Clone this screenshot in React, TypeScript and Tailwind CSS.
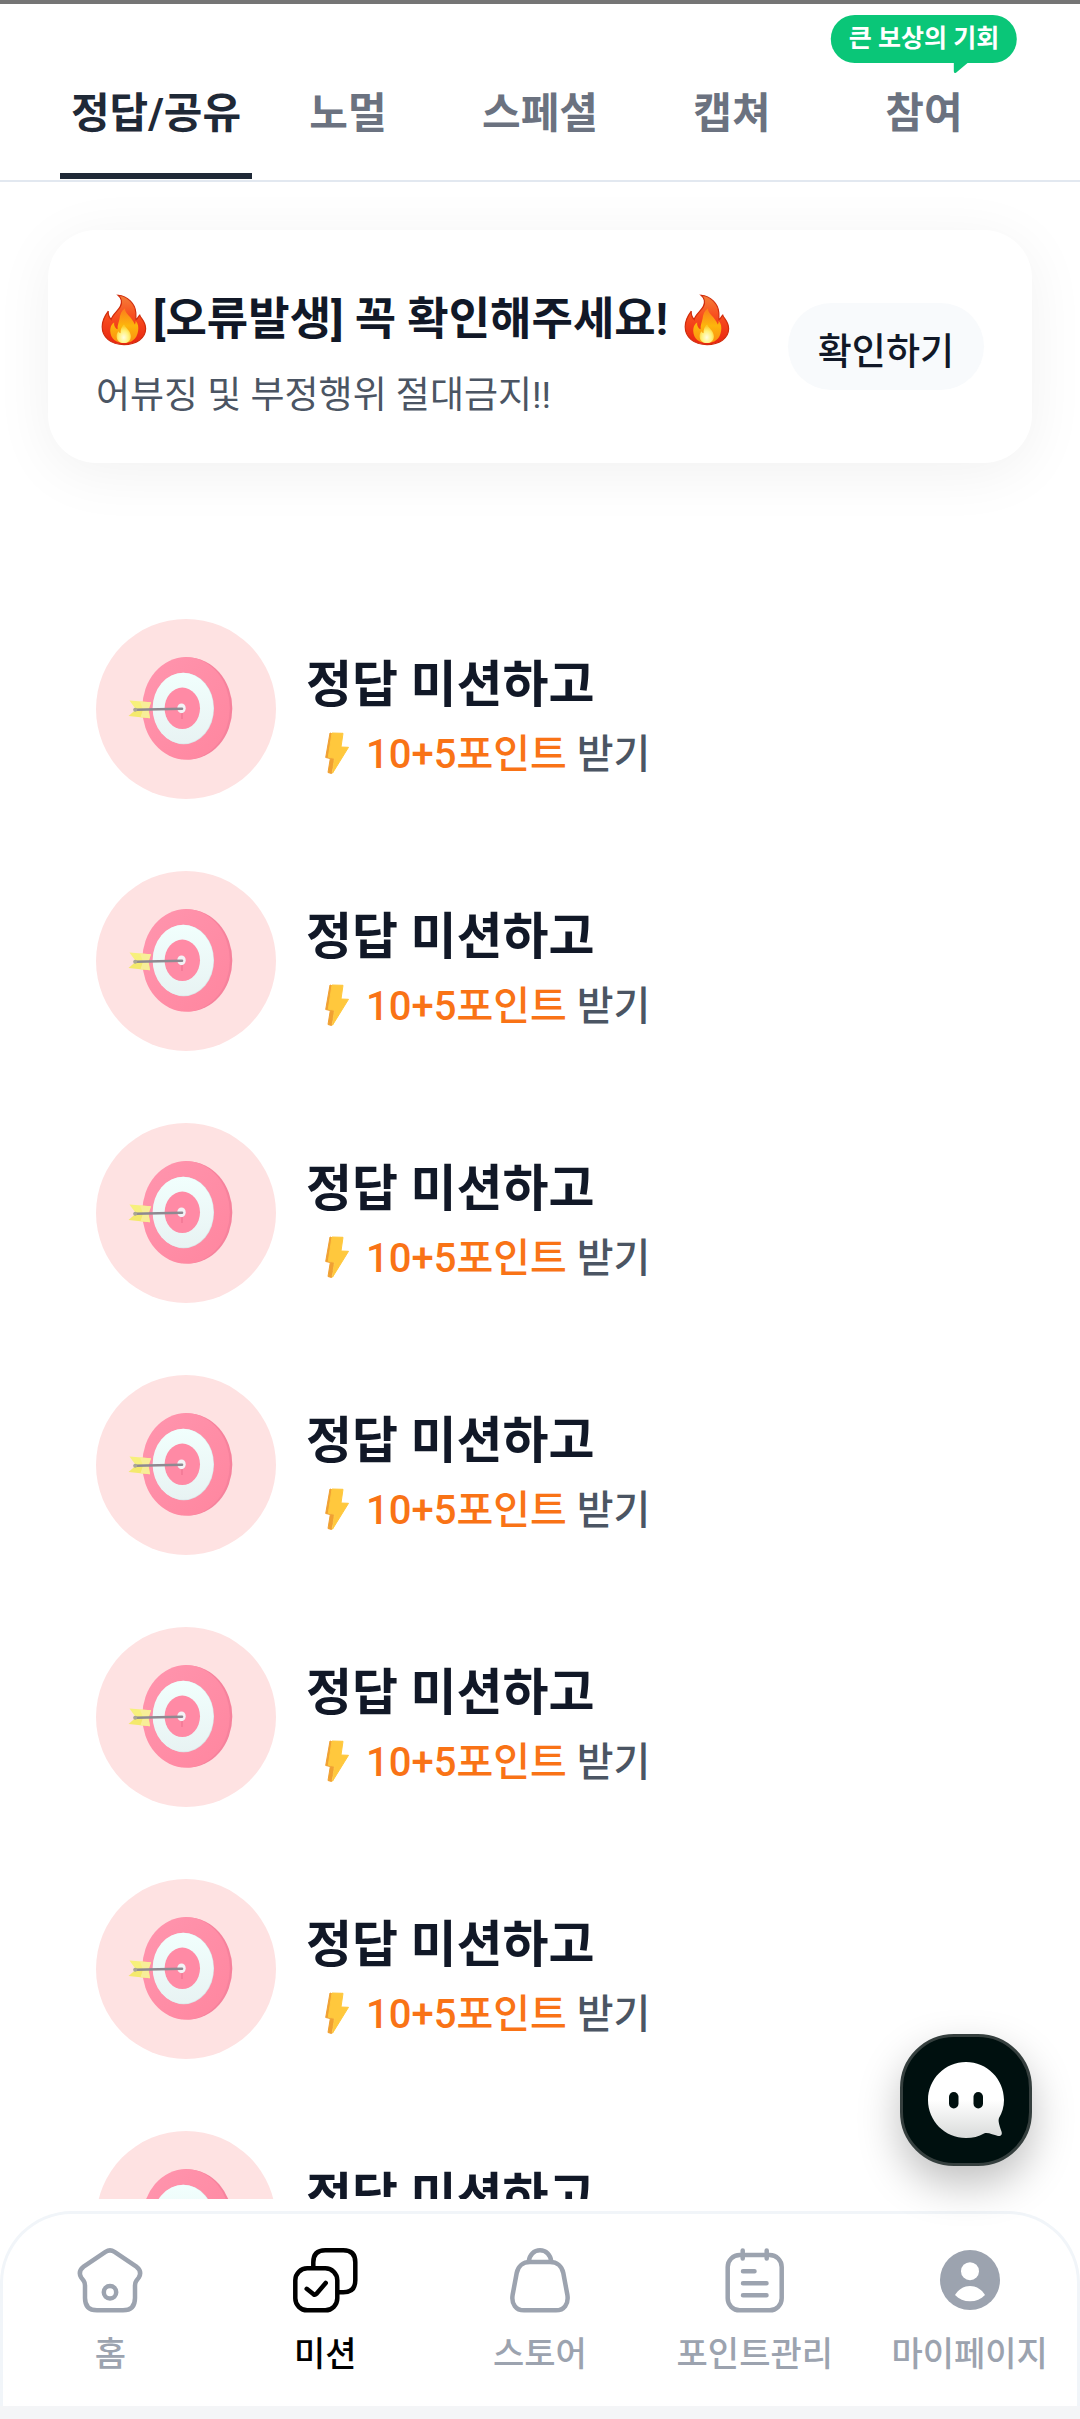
import { useState } from "react";
import type { ReactNode } from "react";
import clsx from "clsx";

const TABS = ["정답/공유", "노멀", "스페셜", "캡쳐", "참여"];

const MISSIONS = Array.from({ length: 7 }, (_, i) => ({
  id: i + 1,
  title: "정답 미션하고",
  point: "10+5포인트",
}));

function FireIcon() {
  return (
    <svg className="w-[57px] h-[57px] shrink-0" viewBox="0 0 58 58" aria-hidden="true">
      <defs>
        <linearGradient id="fire-outer" x1="0" y1="0" x2="0" y2="1">
          <stop offset="0" stopColor="#f4803a" />
          <stop offset="0.4" stopColor="#f8501f" />
          <stop offset="1" stopColor="#ea2410" />
        </linearGradient>
        <linearGradient id="fire-inner" x1="0" y1="0" x2="0" y2="1">
          <stop offset="0" stopColor="#fb7c1c" />
          <stop offset="0.5" stopColor="#fdb50c" />
          <stop offset="1" stopColor="#fb8f12" />
        </linearGradient>
        <radialGradient id="fire-core" cx="0.5" cy="0.7" r="0.6">
          <stop offset="0" stopColor="#fffde0" />
          <stop offset="0.6" stopColor="#fff176" />
          <stop offset="1" stopColor="#fdc92b" />
        </radialGradient>
      </defs>
      <path
        fill="url(#fire-outer)"
        stroke="#d02c0c"
        strokeWidth="1.2"
        d="M22.5 4.3C32 5 40 13 40.5 22C40.8 25 40.3 27 40.8 29C42.5 28 43 26 44.5 24.5C45.5 28 50.5 31 50.5 38.5C50.5 48 41 54.5 28.5 54.5C15 54.5 6.3 47 6.3 36.5C6.3 29 9.5 24.5 12.5 20.5C12 24 13.5 27 15.5 29C17 22 27.5 18 25.8 9.5C25.3 7 24 5.5 22.5 4.3Z"
      />
      <path
        fill="url(#fire-inner)"
        d="M29.5 17.5C29 23 36.5 26 39.5 34C40.2 32.8 40.5 31.5 40.3 30.2C43 33 43.500 37 42.8 41C41.5 49 36 53 28.5 53C20.5 53 14.8 48.5 14.5 41C14.3 37 16 33 18.5 32C18 36 20.5 38.5 22 39C21.5 35 23.5 31.5 24 28C24.3 24 26 20 29.5 17.5Z"
      />
      <path
        fill="url(#fire-core)"
        d="M28.5 34C30 37.5 35.5 40.5 35.5 46C35.5 50.5 32.5 53 28.5 53C24 53 21 50.5 21 46C21 43.5 22 42 23 41C23.5 42.5 24.3 43 25 43C24.8 39.5 26 36 28.5 34Z"
      />
    </svg>
  );
}

function TargetIcon() {
  return (
    <svg className="w-full h-full" viewBox="0 0 180 180" aria-hidden="true">
      <defs>
        <linearGradient id="target-ring" x1="0" y1="0" x2="1" y2="1">
          <stop offset="0" stopColor="#ff95ae" />
          <stop offset="1" stopColor="#ff869f" />
        </linearGradient>
        <linearGradient id="target-white" x1="0" y1="0" x2="0" y2="1">
          <stop offset="0" stopColor="#f1fffd" />
          <stop offset="1" stopColor="#e8f3f3" />
        </linearGradient>
      </defs>
      <ellipse cx="92.3" cy="89.5" rx="44" ry="51" fill="#f6829c" />
      <ellipse cx="90" cy="89.3" rx="43.8" ry="51.3" fill="url(#target-ring)" />
      <ellipse cx="87.8" cy="89.5" rx="30.2" ry="35.7" fill="#dbe7e9" />
      <ellipse cx="87" cy="89.2" rx="30.4" ry="35.4" fill="url(#target-white)" />
      <ellipse cx="86.3" cy="89.3" rx="17.7" ry="20.7" fill="#ff8aa5" />
      <ellipse cx="85.5" cy="89.3" rx="4.2" ry="4.9" fill="#f3f3f6" />
      <path d="M86 94V100" stroke="#ee7390" strokeWidth="1.2" />
      <path d="M33.5 81.5L55 83.3L52.5 90.5H40Z" fill="#f7f07c" />
      <path d="M40 90.5H52.5L54 99.2L32.5 97Z" fill="#f4e96c" />
      <path d="M44 82.4L47 90.5L44.5 98.2L54 99.2L52.5 90.5L55 83.3Z" fill="#f8ee98" />
      <path d="M39 90.7L86 89.7" stroke="#8e8991" strokeWidth="2.6" strokeLinecap="round" />
      <circle cx="39.2" cy="90.7" r="2" fill="#a9a596" />
    </svg>
  );
}

function BoltIcon() {
  return (
    <svg className="w-12 h-12 mb-1 shrink-0" viewBox="0 0 48 48" aria-hidden="true">
      <path
        d="M16 4L19 5L19.500 28L20 30L17.500 44.5L14 43.500L16.300 29.5L11.700 28.5Z"
        fill="#f0a032"
        stroke="#f0a032"
        strokeLinejoin="round"
      />
      <path
        d="M18 4L29 4.3L27 18L34.500 18.3L18.500 44.2L20.500 29.3L14.300 28.2Z"
        fill="#ffc83d"
        stroke="#ffc83d"
        strokeLinejoin="round"
      />
    </svg>
  );
}

function NavSvg({ children }: { children: ReactNode }) {
  return (
    <svg
      className="w-[72px] h-[72px]"
      viewBox="0 0 72 72"
      fill="none"
      stroke="currentColor"
      strokeWidth="4.5"
      strokeLinecap="round"
      strokeLinejoin="round"
      aria-hidden="true"
    >
      {children}
    </svg>
  );
}

function HomeIcon() {
  return (
    <NavSvg>
      <path d="M31.5 7.8Q36 5 40.5 7.8L62 22.3Q68.5 27.5 64.8 33.5L62.3 36.800Q61 38.5 61 41.5V54Q61 66.3 49 66.3H23Q11 66.3 11 54V41.5Q11 38.5 9.7 36.800L7.2 33.5Q3.5 27.5 10 22.3Z" />
      <circle cx="36" cy="48.3" r="6.2" />
    </NavSvg>
  );
}

function MissionIcon() {
  return (
    <NavSvg>
      <rect x="6.3" y="24.3" width="42" height="42" rx="12" />
      <path d="M24.3 23.5V18.3Q24.3 6.3 36.3 6.3H54.3Q66.3 6.3 66.3 18.3V36.3Q66.3 48.3 54.3 48.3H49.5" />
      <path d="M17.7 44.8L24.6 50.3Q26 51.3 27.3 50L36.7 39" />
    </NavSvg>
  );
}

function StoreIcon() {
  return (
    <NavSvg>
      <path d="M26 18H46C53 18 58 22 59.3 29L63.4 51C64.8 60 60 66.3 52 66.3H20C12 66.3 7.2 60 8.6 51L12.7 29C14 22 19 18 26 18Z" />
      <path d="M24.7 17.5C25.5 10.8 30 6.3 36 6.3S46.5 10.8 47.3 17.5" />
    </NavSvg>
  );
}

function PointIcon() {
  return (
    <NavSvg>
      <rect x="8.7" y="11" width="54" height="55.3" rx="12" />
      <path d="M23.7 6.5V14.5M47.7 6.5V14.5M24 27.3H35.5M24 39.3H47.5M24 51.3H47.5" />
    </NavSvg>
  );
}

function MyPageIcon() {
  return (
    <svg className="w-[72px] h-[72px]" viewBox="0 0 72 72" fill="currentColor" aria-hidden="true">
      <circle cx="36" cy="36" r="30" />
      <circle cx="36" cy="27.2" r="9" fill="#fff" />
      <path d="M21 51C24 46 29 42 36 42S48 46 51 51C47 55 42 57.3 36 57.3S25 55 21 51Z" fill="#fff" />
    </svg>
  );
}

const NAV = [
  { label: "홈", icon: <HomeIcon /> },
  { label: "미션", icon: <MissionIcon /> },
  { label: "스토어", icon: <StoreIcon /> },
  { label: "포인트관리", icon: <PointIcon /> },
  { label: "마이페이지", icon: <MyPageIcon /> },
];

function ChatButton() {
  return (
    <button
      aria-label="Chat"
      className="absolute right-12 bottom-[253px] w-[132px] h-[132px] rounded-[54px] bg-[#00100f] border-3 border-[#353f3e] flex items-center justify-center shadow-[0_18px_42px_rgba(0,0,0,0.25)]"
    >
      <svg className="w-20 h-20" viewBox="0 0 80 80" aria-hidden="true">
        <defs>
          <linearGradient id="chat-bubble" x1="0" y1="0" x2="0" y2="1">
            <stop offset="0.5" stopColor="#fff" />
            <stop offset="1" stopColor="#d9dbda" />
          </linearGradient>
        </defs>
        <path
          fill="url(#chat-bubble)"
          d="M40 2C61 2 78 19 78 40C78 47 76 53 73 58C72 61 73 64 75.5 71.5C76.5 74.5 75 76.5 72 76C67 75 62 72 58 73.5C52.5 76.5 47 78 40 78C19 78 2 61 2 40S19 2 40 2Z"
        />
        <rect x="23" y="32" width="9.5" height="16.5" rx="4.75" fill="#00100f" />
        <rect x="47.5" y="32" width="9.5" height="16.5" rx="4.75" fill="#00100f" />
      </svg>
    </button>
  );
}

export default function App() {
  const [tab, setTab] = useState(TABS[0]);
  const [page, setPage] = useState("미션");

  return (
    <div className="relative flex flex-col h-screen bg-white font-[Roboto,'Noto_Sans_CJK_KR',sans-serif] text-[#111827]">
      {/* Tabs */}
      <header className="shrink-0 border-t-4 border-t-[#757575] border-b-2 border-b-[#e2e8f0] px-[60px] pb-px">
        <div className="flex">
          {TABS.map((t) => (
            <button
              key={t}
              onClick={() => setTab(t)}
              className={clsx(
                "relative flex-1 pt-20 pb-[29px] border-b-6 text-[42px] leading-[60px] font-bold whitespace-nowrap",
                tab === t ? "border-[#1f2937] text-[#1f2937]" : "border-transparent text-[#6b7280]"
              )}
            >
              {t}
              {t === "참여" && (
                <span className="absolute top-[11px] left-1/2 -translate-x-1/2 h-12 px-[18px] rounded-full bg-[#0ac678] text-white text-[25px] leading-[48px]">
                  큰 보상의 기회
                  <svg className="absolute top-[47px] right-12 w-4 h-3" viewBox="0 0 16 12" aria-hidden="true">
                    <path d="M1 0H16L3.5 10.5Q1 12 1 9Z" fill="#0ac678" />
                  </svg>
                </span>
              )}
            </button>
          ))}
        </div>
      </header>

      <main className="flex-1 min-h-0 overflow-y-auto [scrollbar-width:none]">
        {/* Notice */}
        <section className="mx-12 mt-12 px-12 py-7 rounded-[48px] bg-white shadow-[0_10px_60px_rgba(0,0,0,0.06)] flex items-center justify-between">
          <div className="pt-6">
            <h2 className="flex items-center text-[45px] leading-[75px] font-bold whitespace-nowrap">
              <FireIcon />
              [오류발생] 꼭 확인해주세요!&nbsp;
              <FireIcon />
            </h2>
            <p className="text-[37px] leading-[78px] text-[#4b5563]">어뷰징 및 부정행위 절대금지!!</p>
          </div>
          <button className="h-[87px] px-[30px] pt-3 rounded-full bg-[#f8fafc] text-[37px] font-medium whitespace-nowrap">
            확인하기
          </button>
        </section>

        {/* Missions */}
        <ul className="px-24 pt-[156px] pb-[72px] flex flex-col gap-[72px]">
          {MISSIONS.map((m) => (
            <li key={m.id}>
              <button className="w-full flex items-center gap-[30px] text-left">
                <span className="w-[180px] h-[180px] shrink-0 rounded-full bg-[#fee2e2]">
                  <TargetIcon />
                </span>
                <span className="flex flex-col pt-4">
                  <span className="text-[50px] leading-[76px] font-bold">{m.title}</span>
                  <span className="flex items-center pl-2 text-[40px] leading-[64px] font-medium text-[#4b5563]">
                    <BoltIcon />
                    <span className="ml-1 text-[#f97316]">{m.point}</span>&nbsp;받기
                  </span>
                </span>
              </button>
            </li>
          ))}
        </ul>
      </main>

      <ChatButton />

      {/* Bottom navigation */}
      <div className="shrink-0 mt-3">
        <nav className="flex h-[195px] pt-[30px] rounded-t-[72px] border-x-3 border-t-3 border-[#f1f5f9] bg-white">
          {NAV.map((n) => (
            <button
              key={n.label}
              onClick={() => setPage(n.label)}
              className={clsx(
                "flex-1 flex flex-col items-center text-[34px] leading-[60px] font-medium whitespace-nowrap",
                page === n.label ? "text-black" : "text-[#9ca3af]"
              )}
            >
              {n.icon}
              <span className="mt-2">{n.label}</span>
            </button>
          ))}
        </nav>
        <div className="h-[13px] bg-[#f4f5f7]" />
      </div>
    </div>
  );
}
